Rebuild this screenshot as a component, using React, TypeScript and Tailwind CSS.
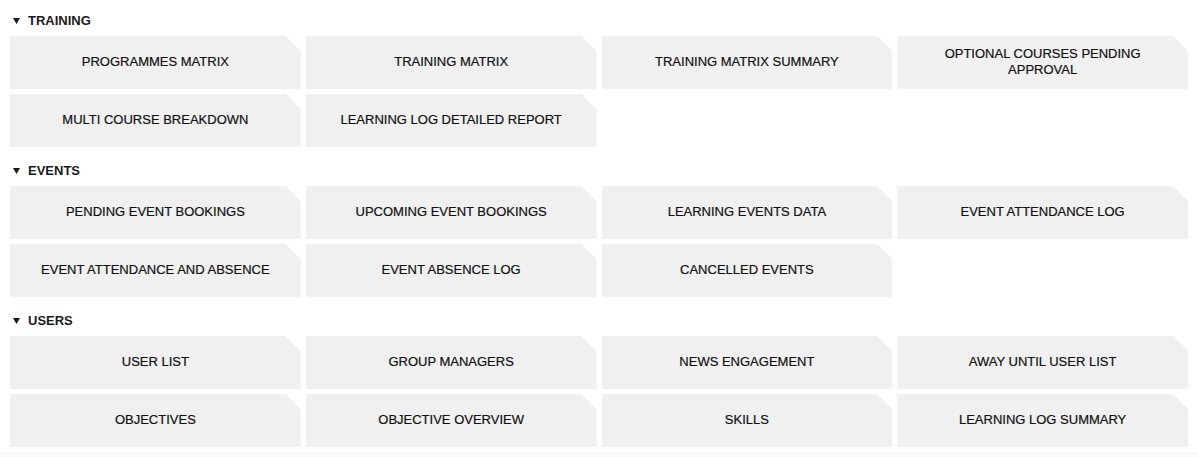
import React from 'react';

const sections: { title: string; items: string[] }[] = [
  {
    title: 'TRAINING',
    items: [
      'PROGRAMMES MATRIX',
      'TRAINING MATRIX',
      'TRAINING MATRIX SUMMARY',
      'OPTIONAL COURSES PENDING APPROVAL',
      'MULTI COURSE BREAKDOWN',
      'LEARNING LOG DETAILED REPORT',
    ],
  },
  {
    title: 'EVENTS',
    items: [
      'PENDING EVENT BOOKINGS',
      'UPCOMING EVENT BOOKINGS',
      'LEARNING EVENTS DATA',
      'EVENT ATTENDANCE LOG',
      'EVENT ATTENDANCE AND ABSENCE',
      'EVENT ABSENCE LOG',
      'CANCELLED EVENTS',
    ],
  },
  {
    title: 'USERS',
    items: [
      'USER LIST',
      'GROUP MANAGERS',
      'NEWS ENGAGEMENT',
      'AWAY UNTIL USER LIST',
      'OBJECTIVES',
      'OBJECTIVE OVERVIEW',
      'SKILLS',
      'LEARNING LOG SUMMARY',
    ],
  },
];

const Tile: React.FC<{ label: string }> = ({ label }) => (
  <button
    className="h-[53px] bg-[#f0f0f0] flex items-center justify-center px-5 pb-[2px] text-center text-[13px] leading-[16px] text-[#111] [-webkit-text-stroke:0.2px_#111] [clip-path:polygon(0_0,calc(100%-15px)_0,100%_15px,100%_100%,0_100%)]"
  >
    {label}
  </button>
);

export default function App() {
  return (
    <div className="w-[1198px] h-[457px] overflow-hidden bg-white font-['Liberation_Sans',Arial,sans-serif]">
      <div className="px-[10px] flex flex-col gap-[3px]">
        {sections.map((s) => (
          <section key={s.title}>
            <div className="pt-[12px] pb-[6px] flex items-center h-[36px]">
              <svg width="7" height="6" viewBox="0 0 7 6" className="ml-[3px] mr-[8px] mt-[-1px]">
                <polygon points="0,0 7,0 3.5,6" fill="#1a1a1a" />
              </svg>
              <h2 className="text-[13px] leading-[18px] font-bold text-[#1a1a1a]">{s.title}</h2>
            </div>
            <div className="grid grid-cols-4 gap-[5px]">
              {s.items.map((it) => (
                <Tile key={it} label={it} />
              ))}
            </div>
          </section>
        ))}
      </div>
      <div className="mt-[5px] h-[10px] bg-[#f9f9f9]" />
    </div>
  );
}
